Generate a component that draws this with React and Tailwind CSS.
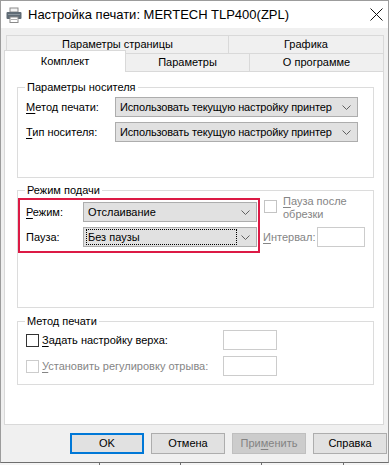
import React from "react";

function Chevron() {
  return (
    <svg width="9" height="5" viewBox="0 0 9 5" className="shrink-0">
      <path d="M0.5 0.5 L4.5 4.5 L8.5 0.5" fill="none" stroke="#606060" strokeWidth="1" />
    </svg>
  );
}

function Combo({ text, w, focus, tight }) {
  return (
    <div className={`${w} h-[20px] bg-[#e1e1e1] border border-[#adadad] flex items-center pr-[6px] pl-[2px]`}>
      <div className={`flex-1 h-[16px] flex items-center pl-[1px] whitespace-nowrap overflow-hidden ${tight ? "tracking-[-0.15px]" : ""} ${focus ? "border border-dotted border-black" : "border border-transparent"}`}>
        {text}
      </div>
      <div className="ml-[4px]"><Chevron /></div>
    </div>
  );
}

function Group({ title, h, mt, children }) {
  return (
    <div className={`${h} ${mt} w-[357px] border border-[#dcdcdc] flex flex-col`}>
      <span className="-mt-[8px] ml-[7px] px-[2px] bg-white w-fit leading-[14px] whitespace-nowrap">{title}</span>
      {children}
    </div>
  );
}

function U({ children }) {
  return <span className="underline underline-offset-[2px] decoration-[1px]">{children}</span>;
}

export default function App() {
  return (
    <div className="w-[389px] h-[465px] bg-[#f0f0f0] font-['Liberation_Sans',Arial,sans-serif] text-[11px] text-black overflow-hidden">
      <div className="h-[463px] border border-[#9c9c9c] border-b-[#6e6e6e] flex flex-col">
        {/* Title bar */}
        <div className="h-[27px] bg-white flex items-center shrink-0">
          <svg width="16" height="16" viewBox="0 0 16 16" className="ml-[5px]">
            <rect x="4" y="1" width="8" height="4" fill="#f4f4f4" stroke="#8a8a8a" />
            <rect x="0.5" y="5" width="15" height="7" rx="1" fill="#5f6b75" />
            <rect x="2" y="7" width="12" height="1" fill="#8b959d" />
            <rect x="4" y="10" width="8" height="5.5" fill="#ffffff" stroke="#8a8a8a" />
            <rect x="5" y="12" width="6" height="1" fill="#b0b0b0" />
          </svg>
          <span className="ml-[6px] text-[13px] whitespace-nowrap">Настройка печати: MERTECH TLP400(ZPL)</span>
          <svg width="13" height="13" viewBox="0 0 13 13" className="ml-auto mr-[5px]">
            <path d="M0.5 0.5 L12.5 12.5 M12.5 0.5 L0.5 12.5" stroke="#111" strokeWidth="1" />
          </svg>
        </div>

        {/* Body */}
        <div className="flex-1 bg-[#f0f0f0] flex flex-col">
          {/* Tab row 1 */}
          <div className="flex ml-[5px] mt-[7px] h-[18px]">
            <div className="w-[223px] h-[18px] border border-b-0 border-[#d9d9d9] bg-[#f0f0f0] flex items-center justify-center">Параметры страницы</div>
            <div className="w-[155px] h-[18px] border-t border-r border-[#d9d9d9] bg-[#f0f0f0] flex items-center justify-center">Графика</div>
          </div>
          {/* Tab row 2 */}
          <div className="flex items-start ml-[3px] h-[18px]">
            <div className="relative z-10 -mt-[3px] w-[122px] h-[22px] border border-b-0 border-[#d9d9d9] bg-white flex items-start justify-center pt-[2px]">Комплект</div>
            <div className="w-[124px] h-[18px] border-t border-r border-[#d9d9d9] bg-[#f0f0f0] flex items-center justify-center">Параметры</div>
            <div className="w-[134px] h-[18px] border-t border-r border-[#d9d9d9] bg-[#f0f0f0] flex items-center justify-center">О программе</div>
          </div>

          {/* Panel */}
          <div className="ml-[3px] w-[380px] h-[354px] border border-[#d9d9d9] bg-white flex flex-col pl-[12px]">
            <Group title="Параметры носителя" h="h-[91px]" mt="mt-[15px]">
              <div className="flex items-center mt-[3px] pl-[8px]">
                <span className="w-[89px] whitespace-nowrap"><U>М</U>етод печати:</span>
                <Combo text="Использовать текущую настройку принтер" w="w-[243px]" tight />
              </div>
              <div className="flex items-center mt-[5px] pl-[8px]">
                <span className="w-[89px] whitespace-nowrap"><U>Т</U>ип носителя:</span>
                <Combo text="Использовать текущую настройку принтер" w="w-[243px]" tight />
              </div>
            </Group>

            <Group title="Режим подачи" h="h-[118px]" mt="mt-[12px]">
              <div className="flex items-start mt-[1px]">
                <div className="w-[242px] h-[55px] border-2 border-[#dc1a45] flex flex-col pt-[2px] pl-[6px]">
                  <div className="flex items-center">
                    <span className="w-[57px]"><U>Р</U>ежим:</span>
                    <Combo text="Отслаивание" w="w-[174px]" />
                  </div>
                  <div className="flex items-center mt-[5px]">
                    <span className="w-[57px]">Пауза:</span>
                    <Combo text="Без паузы" w="w-[174px]" focus />
                  </div>
                </div>
                <div className="flex flex-col ml-[4px] -mt-[3px] text-[#858585]">
                  <div className="flex items-start">
                    <div className="w-[13px] h-[13px] border border-[#c4c4c4] bg-white mt-[5px] shrink-0" />
                    <span className="ml-[6px] leading-[13px]"><U>П</U>ауза после<br />обрезки</span>
                  </div>
                  <div className="flex items-center mt-[6px] -ml-[1px]">
                    <span className="w-[54px] whitespace-nowrap"><U>И</U>нтервал:</span>
                    <div className="w-[48px] h-[20px] border border-[#cccccc] bg-white" />
                  </div>
                </div>
              </div>
            </Group>

            <Group title="Метод печати" h="h-[64px]" mt="mt-[13px]">
              <div className="flex items-center mt-[2px] pl-[8px]">
                <div className="w-[197px] flex items-center">
                  <div className="w-[13px] h-[13px] border border-[#333333] bg-white shrink-0" />
                  <span className="ml-[3px] whitespace-nowrap"><U>З</U>адать настройку верха:</span>
                </div>
                <div className="w-[54px] h-[20px] border border-[#cccccc] bg-white" />
              </div>
              <div className="flex items-center mt-[6px] pl-[8px] text-[#858585]">
                <div className="w-[197px] flex items-center">
                  <div className="w-[13px] h-[13px] border border-[#cccccc] bg-white shrink-0" />
                  <span className="ml-[3px] whitespace-nowrap"><U>У</U>становить регулировку отрыва:</span>
                </div>
                <div className="w-[54px] h-[20px] border border-[#cccccc] bg-white" />
              </div>
            </Group>
          </div>

          {/* Buttons */}
          <div className="flex gap-[7px] ml-[69px] mt-[8px]">
            <div className="w-[74px] h-[21px] border-2 border-[#0078d7] bg-[#e1e1e1] flex items-center justify-center">OK</div>
            <div className="w-[74px] h-[21px] border border-[#adadad] bg-[#e1e1e1] flex items-center justify-center">Отмена</div>
            <div className="w-[74px] h-[21px] border border-[#bfbfbf] bg-[#cccccc] text-[#838383] flex items-center justify-center">При<U>м</U>енить</div>
            <div className="w-[74px] h-[21px] border border-[#adadad] bg-[#e1e1e1] flex items-center justify-center">Справка</div>
          </div>
        </div>
      </div>
      <div className="h-[2px] flex bg-[#f4f4f4]">
        <div className="w-[100px] border-r border-[#6e6e6e]" />
        <div className="w-[81px] border-r border-[#6e6e6e]" />
        <div className="w-[81px] border-r border-[#6e6e6e]" />
        <div className="w-[82px] border-r border-[#6e6e6e]" />
      </div>
    </div>
  );
}
